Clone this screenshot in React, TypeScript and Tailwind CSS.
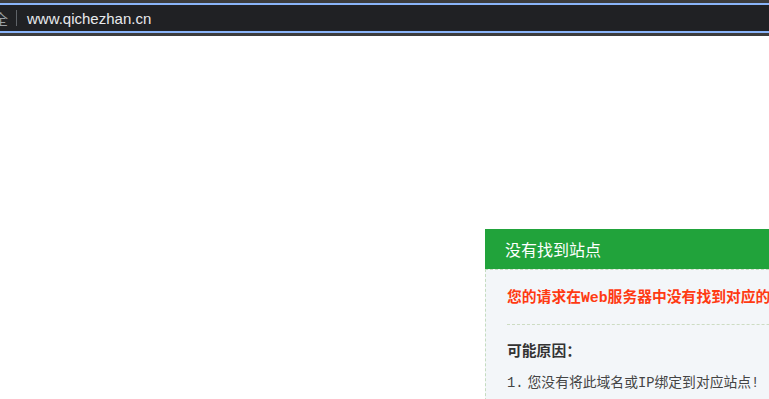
const cjk = "font-['Noto_Sans_CJK_SC',sans-serif]"
const songti = "font-['Liberation_Mono','Noto_Sans_CJK_SC',monospace]"

const AddressBar = () => (
	<div className="h-[36px] bg-[#3c3c3c] pt-[3px] pb-[3px]">
		<div className="flex h-[30px] items-center border-y-2 border-[#8ab4f8] bg-[#202124]">
			<span className={`-ml-[7px] text-[15px] leading-none text-[#9aa0a6] ${cjk}`}>全</span>
			<span className="ml-[8px] h-[16px] w-px bg-[#5f6368]" />
			<span className="ml-[10px] font-['Liberation_Sans',sans-serif] text-[15px] leading-none text-[#e8eaed]">
				www.qichezhan.cn
			</span>
		</div>
	</div>
)

const NotFoundCard = () => (
	<div className={`ml-[485px] mt-[193px] w-[620px] ${songti}`}>
		<div className={`flex h-[40px] items-center bg-[#21a33b] pl-[20px] text-[16px] text-white ${cjk}`}>
			没有找到站点
		</div>
		<div className="border-t border-l border-dashed border-[#c5dcc0] bg-[#f3f6f9] px-[21px] pt-[16px] pb-[20px]">
			<p className="text-[14.8px] leading-[24px] font-bold text-[#ff3a12]">
				您的请求在Web服务器中没有找到对应的站点！
			</p>
			<div className="mt-[14px] border-t border-dashed border-[#cddcc3]" />
			<h3 className="mt-[15px] text-[14.8px] leading-[24px] font-bold text-[#333333]">可能原因：</h3>
			<ol className="mt-[8px] text-[13.8px] leading-[24px] text-[#444444]">
				<li className="flex gap-[4px]">
					<span>1.</span>
					<span>您没有将此域名或IP绑定到对应站点!</span>
				</li>
			</ol>
		</div>
	</div>
)

export default function App() {
	return (
		<div className="h-[399px] w-[769px] overflow-hidden bg-white">
			<AddressBar />
			<NotFoundCard />
		</div>
	)
}
